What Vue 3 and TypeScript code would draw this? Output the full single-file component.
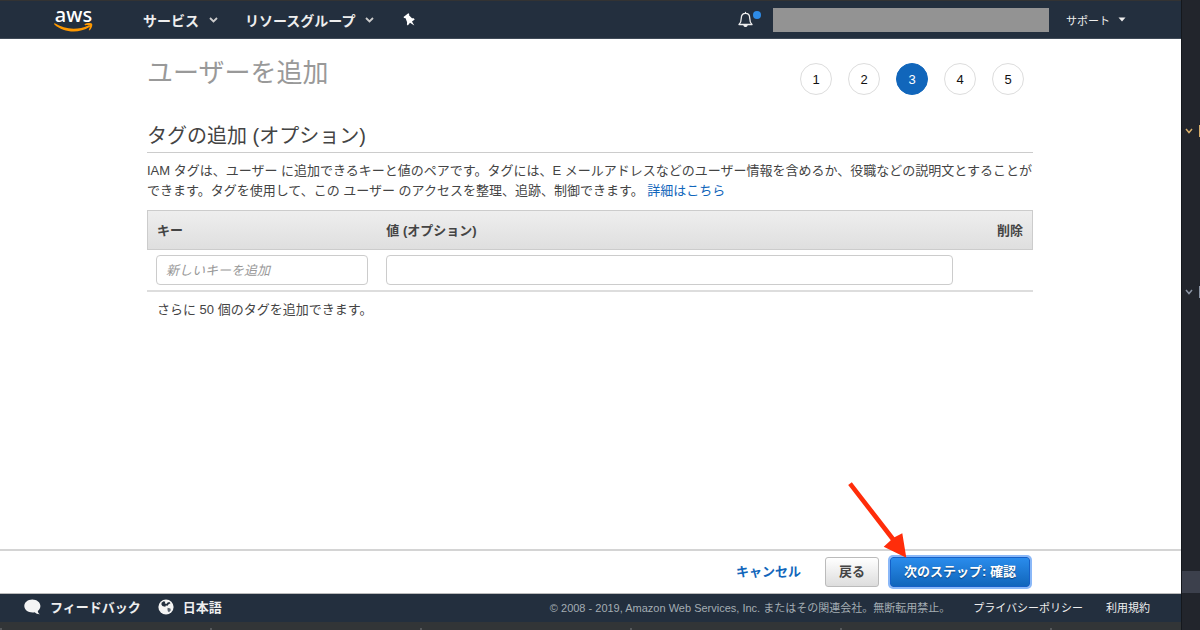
<script setup lang="ts">
import { ref } from 'vue'

const steps: number[] = [1, 2, 3, 4, 5]
const currentStep = 3
const tagKey = ref('')
const tagValue = ref('')
const remaining = 50
</script>

<template>
  <div class="screen">
    <div class="console">
      <header class="topnav">
        <a href="#" class="logo" aria-label="aws">
          <span class="logo-text">aws</span>
          <svg class="smile" width="39" height="9" viewBox="0 0 39 9">
            <path d="M0.800 0.300C10.500 6.600 24 7.400 34.200 2.400C35.700 1.800 36.800 3.200 35.500 4.100C25 10.800 9.500 9.900 0.400 1.500C-0.200 0.800 0.200 0 0.800 0.300Z" fill="#f90" />
            <path d="M30.800 1.100C33.500 -0.500 37.200 -0.200 38 0.700C38.900 1.800 37.600 5.800 35.600 7.300C35.100 7.600 34.600 7.300 34.800 6.700C35.400 5.200 36.200 3.200 35.700 2.500C35.100 1.800 33 2 31.400 2.200C30.700 2.300 30.300 1.500 30.800 1.100Z" fill="#f90" />
          </svg>
        </a>
        <button type="button" class="nav-item">
          サービス
          <svg width="9" height="6" viewBox="0 0 9 6"><path d="M1 1l3.500 3.500L8 1" fill="none" stroke="#ccc" stroke-width="1.800" /></svg>
        </button>
        <button type="button" class="nav-item">
          リソースグループ
          <svg width="9" height="6" viewBox="0 0 9 6"><path d="M1 1l3.500 3.500L8 1" fill="none" stroke="#ccc" stroke-width="1.800" /></svg>
        </button>
        <button type="button" class="pin" aria-label="ピン留め">
          <svg width="13" height="14" viewBox="0 0 13 14">
            <path d="M5.300 0.300L6.300 1.100L6 2.200L9 5.200L10.800 5.300L11.700 6.600L9 8.400L11.300 12.600L7 9.700L4.800 12.400L3.900 11.400L4.100 9.300L2.600 5.200L1.100 5.100L0.500 3.900Z" fill="#fff" />
          </svg>
        </button>
        <div class="nav-right">
          <button type="button" class="bell" aria-label="通知">
            <svg width="15" height="17" viewBox="0 0 15 17">
              <path d="M7.500 1.300V2.300M1 13.500C2.800 11.800 3.300 10 3.300 7C3.300 4 5 2.300 7.500 2.300S11.700 4 11.700 7C11.700 10 12.200 11.800 14 13.500Z" fill="none" stroke="#eee" stroke-width="1.300" stroke-linejoin="round" stroke-linecap="round" />
              <path d="M5.300 14H9.700C9.500 16.700 5.500 16.700 5.300 14Z" fill="#eee" />
            </svg>
            <span class="dot"></span>
          </button>
          <div class="account"></div>
          <button type="button" class="support">
            サポート
            <svg width="8" height="5" viewBox="0 0 8 5"><path d="M0.500 0.500H7.500L4 4.600Z" fill="#eee" /></svg>
          </button>
        </div>
      </header>

      <main class="content">
        <div class="heading">
          <h1>ユーザーを追加</h1>
          <ol class="steps">
            <li v-for="n in steps" :key="n" :class="{ current: n === currentStep }">{{ n }}</li>
          </ol>
        </div>
        <h2>タグの追加 (オプション)</h2>
        <p class="intro">IAM タグは、ユーザー に追加できるキーと値のペアです。タグには、E メールアドレスなどのユーザー情報を含めるか、役職などの説明文とすることができます。タグを使用して、この ユーザー のアクセスを整理、追跡、制御できます。 <a href="#">詳細はこちら</a></p>
        <table class="tags">
          <thead>
            <tr>
              <th class="key" scope="col">キー</th>
              <th class="value" scope="col">値 (オプション)</th>
              <th class="remove" scope="col">削除</th>
            </tr>
          </thead>
          <tbody>
            <tr>
              <td><input v-model="tagKey" type="text" aria-label="キー" placeholder="新しいキーを追加" /></td>
              <td><input v-model="tagValue" type="text" aria-label="値 (オプション)" /></td>
              <td></td>
            </tr>
          </tbody>
        </table>
        <p class="remaining">さらに {{ remaining }} 個のタグを追加できます。</p>
      </main>

      <div class="actions">
        <a href="#" class="cancel">キャンセル</a>
        <button type="button" class="btn">戻る</button>
        <div class="next">
          <button type="button" class="btn primary">次のステップ: 確認</button>
          <svg class="arrow" width="62" height="80" viewBox="0 0 62 80">
            <path d="M3.800 1.200L46.500 56.300L54.300 52.300L58.300 76.700L35.700 65.700L42.800 59.300L0.200 3.900Z" fill="#ff2d0a" />
          </svg>
        </div>
      </div>

      <footer class="footer">
        <a href="#" class="foot-main">
          <svg width="17" height="16" viewBox="0 0 17 16">
            <path d="M8.300 0.500C12.800 0.500 16.400 3.400 16.400 7C16.400 9 15.400 10.700 13.800 11.900C13.900 13.200 14.700 14.500 15.900 15.200C13.800 15.300 11.900 14.500 10.700 13.300C5.300 14.300 0.300 11.300 0.300 7C0.300 3.400 3.800 0.500 8.300 0.500Z" fill="#f4f4f4" />
          </svg>
          <span>フィードバック</span>
        </a>
        <a href="#" class="foot-main">
          <svg width="16" height="16" viewBox="0 0 16 16">
            <circle cx="8" cy="8" r="7.600" fill="#f4f4f4" />
            <path d="M3.600 3.800L5.600 2.300L7.300 2.800L6.800 4.200L8.300 4.900L9.600 3.600L11.400 2.900L12.500 4.200L10.600 5.300L9.600 6.800L7.800 6.600L7.300 7.800L6 7.600L4.400 7L3.400 5.600Z" fill="#232f3e" />
            <path d="M9.600 8.800L12.400 9.600L12.800 11.200L11 13.200L9.800 12.200L9.500 10.600Z" fill="#5a6470" />
          </svg>
          <span>日本語</span>
        </a>
        <span class="copyright">© 2008 - 2019, Amazon Web Services, Inc. またはその関連会社。無断転用禁止。</span>
        <a href="#" class="legal">プライバシーポリシー</a>
        <a href="#" class="legal">利用規約</a>
      </footer>
      <div class="window-edge"></div>
    </div>

    <aside class="editor">
      <div class="fold gold">
        <svg width="8" height="6" viewBox="0 0 8 6"><path d="M1 1l3 3.500L7 1" fill="none" stroke="currentColor" stroke-width="1.500" /></svg>
        <i></i>
      </div>
      <div class="fold">
        <svg width="8" height="6" viewBox="0 0 8 6"><path d="M1 1l3 3.500L7 1" fill="none" stroke="currentColor" stroke-width="1.500" /></svg>
        <i></i>
      </div>
      <div class="active-line"></div>
    </aside>
  </div>
</template>

<style>
body {
  margin: 0;
}
</style>

<style scoped>
.screen {
  display: grid;
  grid-template-columns: minmax(0, 1fr) 19px;
  min-height: 100vh;
  font-family: "Liberation Sans", "Noto Sans CJK JP", sans-serif;
  font-size: 13px;
  color: #444;
  background: #fff;
}
.screen *,
.screen {
  box-sizing: border-box;
}
.console {
  display: flex;
  flex-direction: column;
}
button {
  font-family: inherit;
  margin: 0;
  padding: 0;
  border: 0;
  background: none;
  white-space: nowrap;
  cursor: pointer;
}
a {
  color: #1166bb;
  text-decoration: none;
}
svg {
  display: block;
  flex: none;
}

.topnav {
  display: flex;
  align-items: center;
  height: 39px;
  padding: 0 55px 0 54px;
  background: #232f3e;
  border-top: 1px solid #333;
  border-bottom: 1px solid #3f4a57;
}
.logo {
  width: 39px;
  margin-right: 50px;
  color: #fff;
}
.logo-text {
  display: block;
  font: 500 20px/15px "Noto Sans", sans-serif;
  text-align: center;
}
.smile {
  margin-top: 1px;
}
.nav-item {
  display: flex;
  align-items: center;
  gap: 10px;
  margin-right: 27px;
  font-size: 14px;
  font-weight: 700;
  color: #eee;
}
.pin {
  margin-left: 2px;
}
.nav-right {
  display: flex;
  align-items: center;
  margin-left: auto;
}
.bell {
  display: flex;
  margin-right: 12px;
}
.dot {
  width: 8px;
  height: 8px;
  border-radius: 50%;
  background: #2e8be6;
}
.account {
  width: 276px;
  height: 24px;
  margin-right: 17px;
  background: #939393;
}
.support {
  display: flex;
  align-items: center;
  gap: 8px;
  font-size: 11px;
  color: #eee;
}

.content {
  flex: 1;
  padding: 17px 148px 24px 147px;
}
.heading {
  display: flex;
  justify-content: space-between;
  align-items: flex-start;
}
h1 {
  margin: 0;
  font-size: 26px;
  line-height: 34px;
  font-weight: 400;
  color: #999;
}
.steps {
  display: flex;
  gap: 16px;
  margin: 0;
  padding: 7px 9px 0 0;
  list-style: none;
}
.steps li {
  width: 32px;
  height: 32px;
  border: 1px solid #ddd;
  border-radius: 50%;
  line-height: 31px;
  text-align: center;
  color: #111;
}
.steps .current {
  border-color: #1166bb;
  background: #1166bb;
  color: #fff;
}
h2 {
  margin: 26px 0 0;
  border-bottom: 1px solid #ccc;
  font-size: 20px;
  line-height: 31px;
  font-weight: 400;
}
.intro {
  margin: 8px 0 9px;
  line-height: 20px;
}
.tags {
  width: 100%;
  table-layout: fixed;
  border-collapse: separate;
  border-spacing: 0;
}
th {
  height: 40px;
  padding: 0 9px 2px;
  border: solid #ccc;
  border-width: 1px 0;
  background: linear-gradient(#eee, #dfdfdf);
  font-weight: 700;
  text-align: left;
}
.key {
  width: 26%;
  border-left-width: 1px;
}
.value {
  width: 66%;
}
.remove {
  width: 8%;
  border-right-width: 1px;
  text-align: right;
}
td {
  padding: 5px 9px;
  border-bottom: 2px solid #ddd;
}
input {
  display: block;
  width: 100%;
  height: 30px;
  padding: 0 9px;
  border: 1px solid #ccc;
  border-radius: 4px;
  background: #fff;
  font-family: inherit;
  font-size: 13px;
  color: #444;
}
input::placeholder {
  color: #999;
  font-style: italic;
  opacity: 1;
}
.remaining {
  margin: 8px 0 0;
  padding: 0 10px;
  line-height: 20px;
}

.actions {
  display: flex;
  align-items: center;
  justify-content: flex-end;
  height: 45px;
  padding: 0 151px 0 0;
  border-top: 2px solid #d4d4d4;
  border-bottom: 1px solid #bbb;
}
.cancel {
  margin-right: 24px;
  padding-bottom: 3px;
  font-weight: 700;
}
.btn {
  height: 30px;
  padding: 0 13px 3px;
  border: 1px solid #bbb;
  border-radius: 3px;
  background: linear-gradient(#fff, #ddd);
  font-size: 13px;
  font-weight: 700;
  color: #444;
}
.next {
  position: relative;
  margin-left: 11px;
}
.primary {
  border-color: #1560c8;
  background: linear-gradient(#2a8cec, #1166bb);
  box-shadow: 0 0 0 2px #8ab8f8;
  color: #fff;
  text-shadow: 0 1px 1px #0a3f7a;
}
.arrow {
  position: absolute;
  left: -42px;
  bottom: 26px;
  pointer-events: none;
}

.footer {
  display: flex;
  align-items: center;
  height: 28px;
  padding: 0 31px 2px 24px;
  background: #232f3e;
  font-size: 11px;
  white-space: nowrap;
}
.foot-main {
  display: flex;
  align-items: center;
  gap: 9px;
  margin-right: 17px;
  font-size: 13px;
  font-weight: 700;
  color: #eee;
}
.foot-main span {
  padding-bottom: 2px;
}
.copyright {
  margin-left: auto;
  color: #a3adb3;
}
.legal {
  margin-left: 23px;
  color: #eee;
}
.window-edge {
  height: 8px;
  background: linear-gradient(90deg, #55585b 2px, transparent 2px) 0 100% / 210px 2px repeat-x #323537;
}

.editor {
  display: flex;
  flex-direction: column;
  padding: 125px 0 37px;
  border-left: 1px solid #15181d;
  background: #22252c;
}
.fold {
  display: flex;
  align-items: center;
  justify-content: space-between;
  height: 12px;
  margin-bottom: 149px;
  padding-left: 3px;
  color: #8b94a3;
}
.fold i {
  width: 1px;
  height: 12px;
  background: currentColor;
}
.gold {
  color: #d7ae6b;
}
.active-line {
  height: 22px;
  margin-top: auto;
  background: #3c404c;
}
</style>
